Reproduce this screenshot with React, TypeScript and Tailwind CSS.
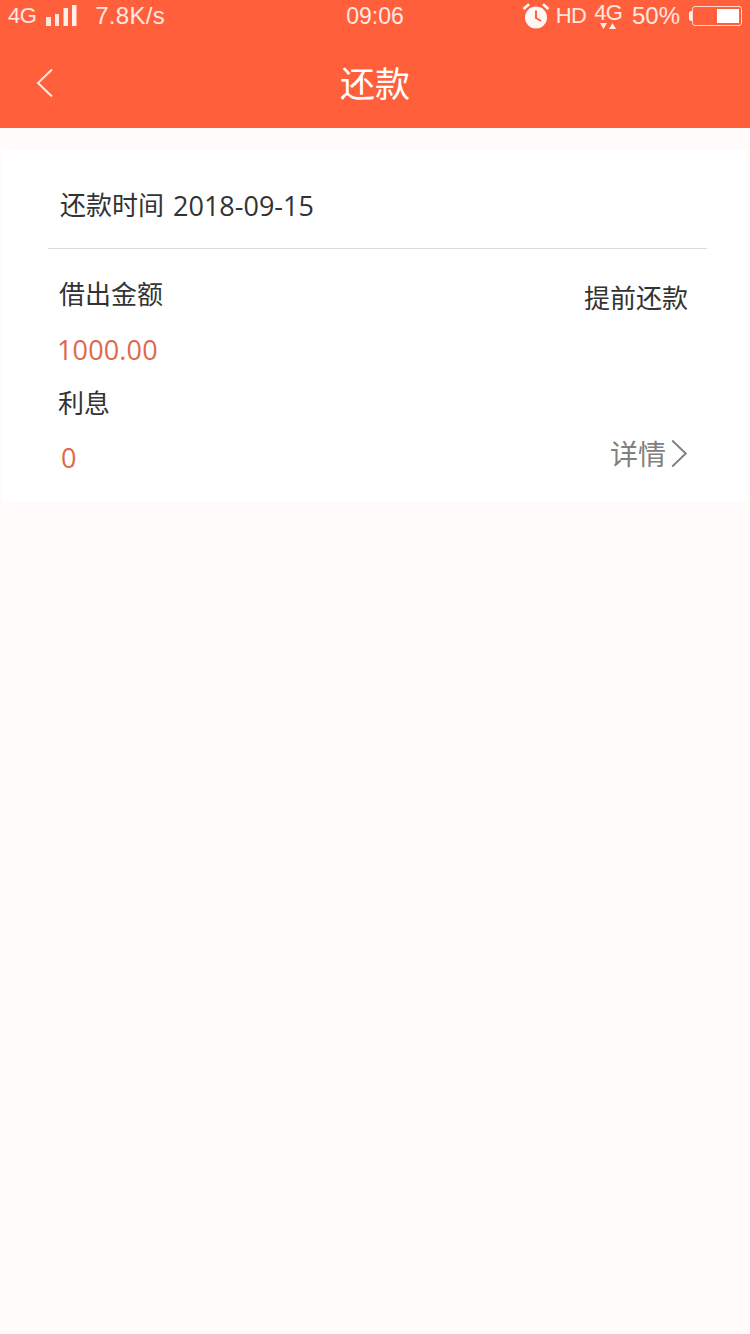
import React from 'react';

const SANS = "font-['Liberation_Sans',sans-serif]";
const BODY = "font-['Open_Sans','Noto_Sans_CJK_SC',sans-serif]";

const SignalIcon = () => (
  <svg width="31" height="22" viewBox="0 0 31 22" className="ml-[10px]">
    <rect x="0" y="12" width="5" height="9" fill="#fff" fillOpacity="0.85" />
    <rect x="9" y="9" width="4" height="12" fill="#fff" fillOpacity="0.85" />
    <rect x="17.5" y="3" width="4.5" height="18" fill="#fff" fillOpacity="0.9" />
    <rect x="26" y="0" width="4.5" height="21" fill="#fff" fillOpacity="0.9" />
  </svg>
);

const AlarmIcon = () => (
  <svg width="28" height="28" viewBox="0 0 28 28">
    <circle cx="14" cy="15.5" r="11" fill="#fff" fillOpacity="0.95" />
    <path d="M14 8.5V16l5 3" fill="none" stroke="#ff5f3b" strokeWidth="2" />
    <path d="M1.5 7 7 2.2M26.5 7 21 2.2" fill="none" stroke="#fff" strokeWidth="2.6" />
  </svg>
);

const BatteryIcon = () => (
  <div className="ml-[9px] flex items-center">
    <div className="h-[10px] w-[3px] rounded-l-[2px] bg-white/90" />
    <div className="flex h-[20px] w-[50px] justify-end rounded-[3px] border-[1.5px] border-white/75 p-[2px]">
      <div className="h-full w-[22px] bg-white" />
    </div>
  </div>
);

const Chevron = ({ className, color }: { className: string; color: string }) => (
  <svg viewBox="0 0 18 30" fill="none" className={className}>
    <path d="M16 1.5 2 15l14 13.5" stroke={color} strokeWidth="2" />
  </svg>
);

const StatusBar = () => (
  <div className={`grid h-[32px] grid-cols-[1fr_auto_1fr] items-center text-[23px] leading-none text-white/85 ${SANS}`}>
    <div className="flex items-center pl-[8px]">
      <span className="text-[22px] tracking-[-0.6px]">4G</span>
      <SignalIcon />
      <span className="ml-[18px] text-[24px] tracking-[0.3px]">7.8K/s</span>
    </div>
    <span>09:06</span>
    <div className="flex items-center justify-end pr-[8px]">
      <AlarmIcon />
      <span className="ml-[6px] text-[22px] tracking-[-0.7px]">HD</span>
      <div className="ml-[8px] flex flex-col items-center">
        <span className="text-[22px] leading-[19px] tracking-[-0.8px]">4G</span>
        <svg width="22" height="7" viewBox="0 0 22 7" className="mt-[1px]">
          <path d="M3 0h7L6.500 6zM12 6h7L15.500 0z" fill="#fff" fillOpacity="0.9" />
        </svg>
      </div>
      <span className="ml-[10px] text-[24px]">50%</span>
      <BatteryIcon />
    </div>
  </div>
);

const App = () => {
  return (
    <div className={`flex min-h-[1334px] w-[750px] flex-col bg-[#fffbfa] ${BODY}`}>
      <div className="h-[128px] bg-[#ff5f3b]">
        <StatusBar />
        <div className="relative flex h-[96px] items-center justify-center pt-[6px]">
          <Chevron className="absolute left-[36px] top-[36px] h-[30px] w-[18px]" color="#ffe9e2" />
          <span className="text-[35px] leading-none text-white">还款</span>
        </div>
      </div>

      <div className="ml-[2px] mt-[22px] h-[352px] bg-white">
        <div className="ml-[46px] mr-[43px] flex h-[99px] items-center border-b border-[#dcdcdc] pl-[12px] pt-[12px] text-[26px] leading-none text-[#333333]">
          <span>还款时间</span>
          <span className="ml-[9px] text-[27px]">2018-09-15</span>
        </div>
        <div className="flex justify-between pl-[55px] pr-[62px] pt-[32px]">
          <div className="flex flex-col items-start text-[26px] leading-none">
            <span className="ml-[2px] text-[#333333]">借出金额</span>
            <span className="mt-[29px] text-[27px] tracking-[0.15px] text-[#e0684a]">1000.00</span>
            <span className="ml-[1px] mt-[27px] text-[#333333]">利息</span>
            <span className="ml-[4px] mt-[28px] text-[27px] text-[#e0684a]">0</span>
          </div>
          <div className="flex flex-col items-end text-[26px] leading-none">
            <span className="mt-[4px] text-[#333333]">提前还款</span>
            <div className="mt-[128px] flex items-center text-[#808080]">
              <span className="text-[28px]">详情</span>
              <Chevron className="ml-[4px] h-[29px] w-[18px] rotate-180" color="#808080" />
            </div>
          </div>
        </div>
      </div>
    </div>
  );
};

export default App;
